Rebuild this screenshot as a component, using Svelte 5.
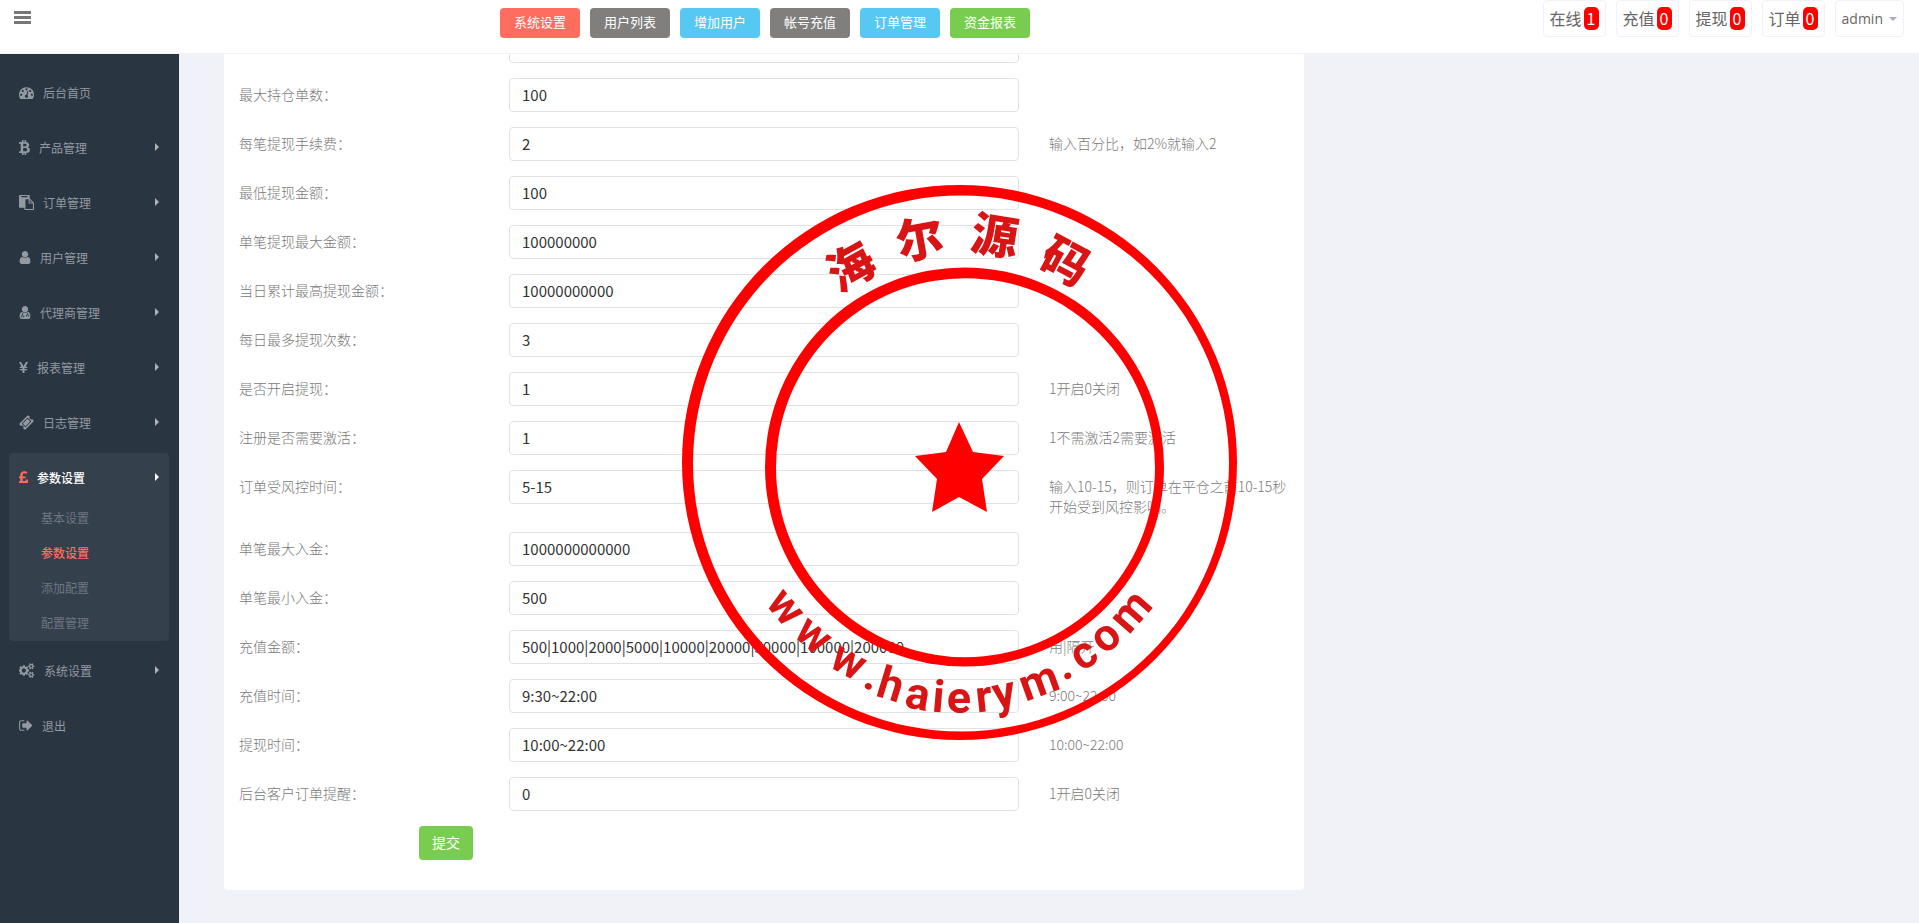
<script>
  const icons = {
    dashboard: { box: '0 0 1792 1792', w: 15, d: 'M384 1152q0-53-37.5-90.5t-90.5-37.5-90.5 37.5-37.5 90.5 37.5 90.5 90.5 37.5 90.5-37.5 37.5-90.5zm192-448q0-53-37.5-90.5t-90.5-37.5-90.5 37.5-37.5 90.5 37.5 90.5 90.5 37.5 90.5-37.5 37.5-90.5zm428 481l101-382q6-26-7.5-48.5t-38.5-29.5-48 6.5-30 39.5l-101 382q-60 5-107 43.5t-63 98.5q-20 77 20 146t117 89 146-20 89-117q16-60-6-117t-72-91zm660-33q0-53-37.5-90.5t-90.5-37.5-90.5 37.5-37.5 90.5 37.5 90.5 90.5 37.5 90.5-37.5 37.5-90.5zm-640-640q0-53-37.5-90.5t-90.5-37.5-90.5 37.5-37.5 90.5 37.5 90.5 90.5 37.5 90.5-37.5 37.5-90.5zm448 192q0-53-37.5-90.5t-90.5-37.5-90.5 37.5-37.5 90.5 37.5 90.5 90.5 37.5 90.5-37.5 37.5-90.5zm320 448q0 261-141 483-19 29-54 29h-1402q-35 0-54-29-141-221-141-483 0-182 71-348t191-286 286-191 348-71 348 71 286 191 191 286 71 348z' },
    bitcoin: { box: '0 0 11 15', w: 11, d: 'M0 2H3V0H4.600V2H5.600V0H7.200V2.200C9.200 2.500 10.200 3.500 10.200 4.900C10.200 6 9.600 6.700 8.600 7.200C10.100 7.600 10.900 8.600 10.900 9.900C10.900 11.800 9.600 12.800 7.200 13V15H5.600V13H4.600V15H3V13H0L.4 11.300H1.700V3.700H0ZM4.200 3.700V6.500H5.400C6.900 6.500 7.700 6.100 7.700 5.100S6.900 3.700 5.400 3.700ZM4.200 8.100V11.300H5.600C7.400 11.300 8.300 10.800 8.300 9.700S7.400 8.100 5.600 8.100Z' },
    paste: { box: '0 0 1792 1792', w: 15, d: 'M768 1664h896v-640h-416q-40 0-68-28t-28-68v-416h-384v1152zm256-1440v-64q0-13-9.5-22.500t-22.500-9.500h-704q-13 0-22.500 9.500t-9.500 22.500v64q0 13 9.500 22.500t22.500 9.500h704q13 0 22.500-9.500t9.500-22.500zm256 672h299l-299-299v299zm512 128v672q0 40-28 68t-68 28h-960q-40 0-68-28t-28-68v-160h-544q-40 0-68-28t-28-68v-1344q0-40 28-68t68-28h1088q40 0 68 28t28 68v328q21 13 36 28l408 408q28 28 48 76t20 88z' },
    user: { box: '256 0 1280 1792', w: 12, d: 'M1536 1399q0 109-62.5 187t-150.500 78h-854q-88 0-150.500-78t-62.500-187q0-85 8.500-160.500t31.500-152 58.500-131 94-89 134.500-34.500q131 128 313 128t313-128q76 0 134.500 34.500t94 89 58.500 131 31.500 152 8.500 160.500zm-256-887q0 159-112.500 271.500t-271.500 112.500-271.500-112.500-112.500-271.500 112.500-271.500 271.500-112.500 271.500 112.500 112.500 271.500z' },
    doctor: { box: '256 0 1280 1792', w: 12, d: 'M1536 1399q0 109-62.5 187t-150.500 78h-854q-88 0-150.500-78t-62.500-187q0-85 8.500-160.500t31.500-152 58.500-131 94-89 134.500-34.500q131 128 313 128t313-128q76 0 134.500 34.500t94 89 58.500 131 31.500 152 8.500 160.500zm-256-887q0 159-112.500 271.500t-271.500 112.500-271.500-112.500-112.500-271.500 112.500-271.500 271.500-112.500 271.500 112.500 112.500 271.500z', cut: 'M600 960V1280M470 1500V1360Q470 1270 600 1270T730 1360V1500M1200 960V1180M1060 1400V1290Q1060 1170 1200 1170T1340 1290V1400' },
    yen: { box: '0 0 9 15', w: 9, d: 'M0 2H2.100L4.500 6.300L6.900 2H9L6.500 6.700H8.200V8H5.500V9H8.200V10.300H5.500V13H3.500V10.300H.8V9H3.500V8H.8V6.700H2.500Z' },
    ticket: { box: '0 0 1792 1792', w: 15, d: 'M1024 452l316 316-572 572-316-316zm-211 979l618-618q19-19 19-45t-19-45l-362-362q-18-18-45-18t-45 18l-618 618q-19 19-19 45t19 45l362 362q18 18 45 18t45-18zm889-637l-907 908q-37 37-90.500 37t-90.500-37l-126-126q56-56 56-136t-56-136-136-56-136 56l-125-126q-37-37-37-90.500t37-90.500l907-906q37-37 90.500-37t90.500 37l125 125q-56 56-56 136t56 136 136 56 136-56l126 125q37 37 37 90.500t-37 90.500z' },
    pound: { box: '0 0 9 15', w: 9, d: 'M0 13V11.200H1.300V8.200H0V6.600H1.300V4.900C1.300 2.600 2.900 1.300 5.200 1.300C6.700 1.300 7.700 1.800 8.400 2.400L7.200 4C6.700 3.600 6.100 3.300 5.300 3.300C4.200 3.300 3.700 3.900 3.700 5V6.600H6.600V8.200H3.700V11.100H6.600V9.500H8.900V13Z' },
    cogs: { box: '0 0 1920 1792', w: 16, d: 'M832 896q0-106-75-181t-181-75-181 75-75 181 75 181 181 75 181-75 75-181zm768 512q0-52-38-90t-90-38-90 38-38 90q0 53 37.500 90.500t90.500 37.500 90.500-37.500 37.500-90.500zm0-1024q0-52-38-90t-90-38-90 38-38 90q0 53 37.500 90.500t90.500 37.500 90.500-37.500 37.500-90.500zm-384 421v185q0 10-7 19.500t-16 10.500l-155 24q-11 35-32 76 34 48 90 115 7 11 7 20 0 12-7 19-23 30-82.500 89.500t-78.500 59.500q-11 0-21-7l-115-90q-37 19-77 31-11 108-23 155-7 24-30 24h-186q-11 0-20-7.500t-10-17.500l-23-153q-34-10-75-31l-118 89q-7 7-20 7-11 0-21-8-144-133-144-160 0-9 7-19 10-14 41-53t47-61q-23-44-35-82l-152-24q-10-1-17-9.500t-7-19.500v-185q0-10 7-19.500t16-10.500l155-24q11-35 32-76-34-48-90-115-7-11-7-20 0-12 7-20 22-30 82-89t79-59q11 0 21 7l115 90q34-18 77-32 11-108 23-154 7-24 30-24h186q11 0 20 7.500t10 17.500l23 153q34 10 75 31l118-89q8-7 20-7 11 0 21 8 144 133 144 160 0 8-7 19-12 16-42 54t-45 60q23 48 34 82l152 23q10 2 17 10.500t7 19.500zm640 533v140q0 16-149 31-12 27-30 52 51 113 51 138 0 4-4 7-122 71-124 71-8 0-46-47t-52-68q-20 2-30 2t-30-2q-14 21-52 68t-46 47q-2 0-124-71-4-3-4-7 0-25 51-138-18-25-30-52-149-15-149-31v-140q0-16 149-31 13-29 30-52-51-113-51-138 0-4 4-7 4-2 35-20t59-34 30-16q8 0 46 46.500t52 67.500q20-2 30-2t30 2q51-71 92-112l6-2q4 0 124 70 4 3 4 7 0 25-51 138 17 23 30 52 149 15 149 31zm0-1024v140q0 16-149 31-12 27-30 52 51 113 51 138 0 4-4 7-122 71-124 71-8 0-46-47t-52-68q-20 2-30 2t-30-2q-14 21-52 68t-46 47q-2 0-124-71-4-3-4-7 0-25 51-138-18-25-30-52-149-15-149-31v-140q0-16 149-31 13-29 30-52-51-113-51-138 0-4 4-7 4-2 35-20t59-34 30-16q8 0 46 46.500t52 67.500q20-2 30-2t30 2q51-71 92-112l6-2q4 0 124 70 4 3 4 7 0 25-51 138 17 23 30 52 149 15 149 31z' },
    logout: { box: '64 0 1664 1792', w: 14, d: 'M704 1440q0 4 1 20t.5 26.500-3 23.500-10 19.500-20.500 6.500h-320q-119 0-203.500-84.500t-84.500-203.500v-704q0-119 84.500-203.500t203.500-84.500h320q13 0 22.500 9.500t9.500 22.500q0 4 1 20t.5 26.500-3 23.500-10 19.500-20.500 6.500h-320q-66 0-113 47t-47 113v704q0 66 47 113t113 47h312l11.500 1 11.500 3 8 5.500 7 9 2 13.500zm928-544q0 26-19 45l-544 544q-19 19-45 19t-45-19-19-45v-288h-448q-26 0-45-19t-19-45v-384q0-26 19-45t45-19h448v-288q0-26 19-45t45-19 45 19l544 544q19 19 19 45z' }
  };

  const menu = [
    { text: '后台首页', icon: 'dashboard' },
    { text: '产品管理', icon: 'bitcoin', more: true },
    { text: '订单管理', icon: 'paste', more: true },
    { text: '用户管理', icon: 'user', more: true },
    { text: '代理商管理', icon: 'doctor', more: true },
    { text: '报表管理', icon: 'yen', more: true },
    { text: '日志管理', icon: 'ticket', more: true },
    { text: '参数设置', icon: 'pound', more: true, open: true, children: ['基本设置', '参数设置', '添加配置', '配置管理'] },
    { text: '系统设置', icon: 'cogs', more: true },
    { text: '退出', icon: 'logout' }
  ];

  const shortcuts = [
    ['系统设置', 'red'],
    ['用户列表', 'gray'],
    ['增加用户', 'blue'],
    ['帐号充值', 'gray'],
    ['订单管理', 'blue'],
    ['资金报表', 'green']
  ];

  const counters = [['在线', 1], ['充值', 0], ['提现', 0], ['订单', 0]];

  const fields = [
    ['最大持仓单数', '100', ''],
    ['每笔提现手续费', '2', '输入百分比，如2%就输入2'],
    ['最低提现金额', '100', ''],
    ['单笔提现最大金额', '100000000', ''],
    ['当日累计最高提现金额', '10000000000', ''],
    ['每日最多提现次数', '3', ''],
    ['是否开启提现', '1', '1开启0关闭'],
    ['注册是否需要激活', '1', '1不需激活2需要激活'],
    ['订单受风控时间', '5-15', '输入10-15，则订单在平仓之前10-15秒开始受到风控影响。'],
    ['单笔最大入金', '1000000000000', ''],
    ['单笔最小入金', '500', ''],
    ['充值金额', '500|1000|2000|5000|10000|20000|50000|100000|200000', '用|隔开'],
    ['充值时间', '9:30~22:00', '9:00~22:00'],
    ['提现时间', '10:00~22:00', '10:00~22:00'],
    ['后台客户订单提醒', '0', '1开启0关闭']
  ];

  // Seal lettering: character, angle around the centre, distance to the baseline
  const sealTop = [['海', -29, 206], ['尔', -10, 209], ['源', 9, 212], ['码', 28, 210]];
  const sealBottom = [
    ['w', 50, 240], ['w', 40, 240], ['w', 29, 242], ['.', 22, 245], ['h', 17, 248],
    ['a', 10, 251], ['i', 5, 251], ['e', 0, 251], ['r', -6, 251], ['y', -11, 250],
    ['m', -20, 248], ['.', -27, 243], ['c', -33, 243], ['o', -40, 242], ['m', -49, 242]
  ];
</script>

<div class="shell">
  <header>
    <button class="toggle" type="button" aria-label="菜单"><i></i><i></i><i></i></button>
    <nav class="shortcuts">
      {#each shortcuts as [text, tone]}
        <a href="#top" class={tone}>{text}</a>
      {/each}
    </nav>
    <div class="status">
      {#each counters as [text, count]}
        <a href="#top" class="box counter">{text}<span>{count}</span></a>
      {/each}
      <button type="button" class="box account">admin<i class="caret"></i></button>
    </div>
  </header>

  <div class="body">
    <aside>
      <ul class="menu">
        {#each menu as item}
          <li class:open={item.open}>
            <a href="#top">
              <svg viewBox={icons[item.icon].box} width={icons[item.icon].w} height="15" aria-hidden="true">
                <path d={icons[item.icon].d} fill="currentColor" fill-rule="evenodd" />
                {#if icons[item.icon].cut}
                  <path d={icons[item.icon].cut} fill="none" stroke="#2a3542" stroke-width="100" />
                {/if}
              </svg>
              <span>{item.text}</span>
              {#if item.more}<i class="arrow"></i>{/if}
            </a>
            {#if item.children}
              <ul class="sub">
                {#each item.children as child, n}
                  <li><a href="#top" class:current={n === 1}>{child}</a></li>
                {/each}
              </ul>
            {/if}
          </li>
        {/each}
      </ul>
    </aside>

    <main>
      <form class="card">
        <div class="row first">
          <div class="cell"></div>
          <div class="cell"><input type="text" aria-label="持仓设置" /></div>
          <div class="cell"></div>
        </div>
        {#each fields as [label, value, hint], n}
          <div class="row">
            <label class="cell text" for="field{n}">{label}：</label>
            <div class="cell"><input id="field{n}" type="text" {value} /></div>
            <div class="cell text">{hint}</div>
          </div>
        {/each}
        <div class="actions"><button type="button">提交</button></div>
      </form>
    </main>
  </div>

  <svg class="seal" viewBox="-280 -280 559 559" width="559" height="559" aria-hidden="true">
    <g fill="#f00">
      <path fill-rule="evenodd" d="M-277 0.500a277.500 277.500 0 1 0 555 0a277.500 277.500 0 1 0 -555 0ZM-266 1.500a268 268 0 1 0 536 0a268 268 0 1 0 -536 0Z" />
      <path fill-rule="evenodd" d="M-194 5a199.500 199.500 0 1 0 399 0a199.500 199.500 0 1 0 -399 0ZM-183 5.700a189.500 189.500 0 1 0 379 0a189.500 189.500 0 1 0 -379 0Z" />
      <path d="M0-40L14-10L45-6L23 17L28 50L0 35L-27 50L-22 17L-44-6L-13-10Z" />
    </g>
    <g class="top-text">
      {#each sealTop as [ch, angle, r]}
        <text text-anchor="middle" y={-r} transform="rotate({angle})">{ch}</text>
      {/each}
    </g>
    <g class="bottom-text">
      {#each sealBottom as [ch, angle, r]}
        <text text-anchor="middle" y={r} transform="rotate({angle})">{ch}</text>
      {/each}
    </g>
  </svg>
</div>

<style>
  :global(body) {
    margin: 0;
    background: #f1f2f7;
    font-family: "Noto Sans CJK SC", "Noto Sans", sans-serif;
  }
  .shell {
    min-height: 100vh;
    display: flex;
    flex-direction: column;
  }
  a { text-decoration: none; }
  ul { list-style: none; margin: 0; padding: 0; }
  button, input { font-family: inherit; box-sizing: border-box; }

  header {
    display: flex;
    align-items: flex-start;
    height: 53px;
    padding: 0 15px 0 14px;
    background: #fff;
    border-bottom: 1px solid #f1f2f7;
  }
  .toggle {
    display: flex;
    flex-direction: column;
    gap: 2px;
    width: 17px;
    margin-top: 11px;
    padding: 0;
    border: 0;
    background: none;
  }
  .toggle i { height: 3px; background: #777; }
  .shortcuts {
    display: flex;
    gap: 10px;
    margin: 8px 0 0 469px;
  }
  .shortcuts a {
    box-sizing: border-box;
    width: 80px;
    padding-bottom: 2px;
    border-radius: 4px;
    color: #fff;
    font-size: 13px;
    line-height: 28px;
    text-align: center;
  }
  .red { background: #ff6c60; }
  .gray { background: #817f7e; }
  .blue { background: #57c8f2; }
  .green { background: #78cd51; }
  .status {
    display: flex;
    gap: 10px;
    margin-left: auto;
  }
  .box {
    box-sizing: border-box;
    display: flex;
    align-items: center;
    height: 37px;
    padding: 0 6px;
    border: 1px solid #f1f1f9;
    border-radius: 4px;
    background: #fff;
    color: #666;
  }
  .counter {
    gap: 2px;
    font-size: 16px;
    line-height: 23px;
  }
  .counter span {
    width: 15px;
    border-radius: 5px;
    background: #f00;
    color: #fff;
    text-align: center;
  }
  .account {
    gap: 6px;
    font-family: "Open Sans", sans-serif;
    font-size: 14px;
  }
  .caret {
    border: 4px solid transparent;
    border-top-color: #a9adbd;
    border-bottom: 0;
  }

  .body { display: flex; flex: 1; }
  aside {
    box-sizing: border-box;
    flex: none;
    width: 179px;
    padding: 14px 10px 14px 9px;
    background: #2a3542;
  }
  .menu {
    display: flex;
    flex-direction: column;
    gap: 5px;
  }
  .menu > li > a {
    box-sizing: border-box;
    display: flex;
    align-items: center;
    gap: 9px;
    height: 50px;
    padding: 0 10px 2px;
    color: #9299a1;
    font-size: 12px;
  }
  .menu span { flex: 1; }
  .arrow {
    border: 4px solid transparent;
    border-left-color: #aeb2b7;
    border-right: 0;
  }
  .open { border-radius: 4px; background: #35404d; }
  .menu > .open > a { color: #fff; font-weight: 500; }
  .open svg { color: #ff6c60; }
  .open .arrow { border-left-color: #fff; }
  .sub {
    display: flex;
    flex-direction: column;
    gap: 4px;
    padding: 0 0 2px 32px;
  }
  .sub a {
    display: block;
    padding-bottom: 2px;
    color: #6e7681;
    font-size: 12px;
    line-height: 29px;
  }
  .sub .current { color: #ff6c60; font-weight: 500; }

  main {
    flex: 1;
    min-width: 0;
    overflow: hidden;
    padding: 0 60px 33px 45px;
  }
  .card {
    box-sizing: border-box;
    width: 66.06%;
    margin-top: -40px;
    padding: 15px 0 30px;
    border-radius: 4px;
    background: #fff;
  }
  .row {
    display: grid;
    grid-template-columns: 3fr 6fr 3fr;
    align-items: start;
    margin-bottom: 15px;
  }
  .cell { padding: 0 15px; }
  .text {
    padding-top: 6px;
    padding-bottom: 1px;
    color: #797979;
    font-size: 14px;
    font-weight: 300;
    line-height: 20px;
  }
  input {
    display: block;
    width: 100%;
    height: 34px;
    padding: 5px 12px 7px;
    border: 1px solid #e2e2e4;
    border-radius: 4px;
    background: #fff;
    color: #333;
    font-size: 15px;
    line-height: 20px;
  }
  .actions { margin-left: 16.6667%; padding-left: 15px; }
  .actions button {
    display: block;
    width: 54px;
    height: 34px;
    padding: 0 0 2px;
    border: 0;
    border-radius: 4px;
    background: #78cd51;
    color: #fff;
    font-size: 14px;
  }

  .seal {
    position: fixed;
    top: 50%;
    left: 50%;
    margin: -280px 0 0 -281px;
    pointer-events: none;
  }
  .top-text, .bottom-text { fill: #d91414; font-weight: 700; }
  .top-text { font-size: 47px; font-weight: 900; }
  .bottom-text { font-family: Roboto, sans-serif; font-size: 45px; }
</style>
